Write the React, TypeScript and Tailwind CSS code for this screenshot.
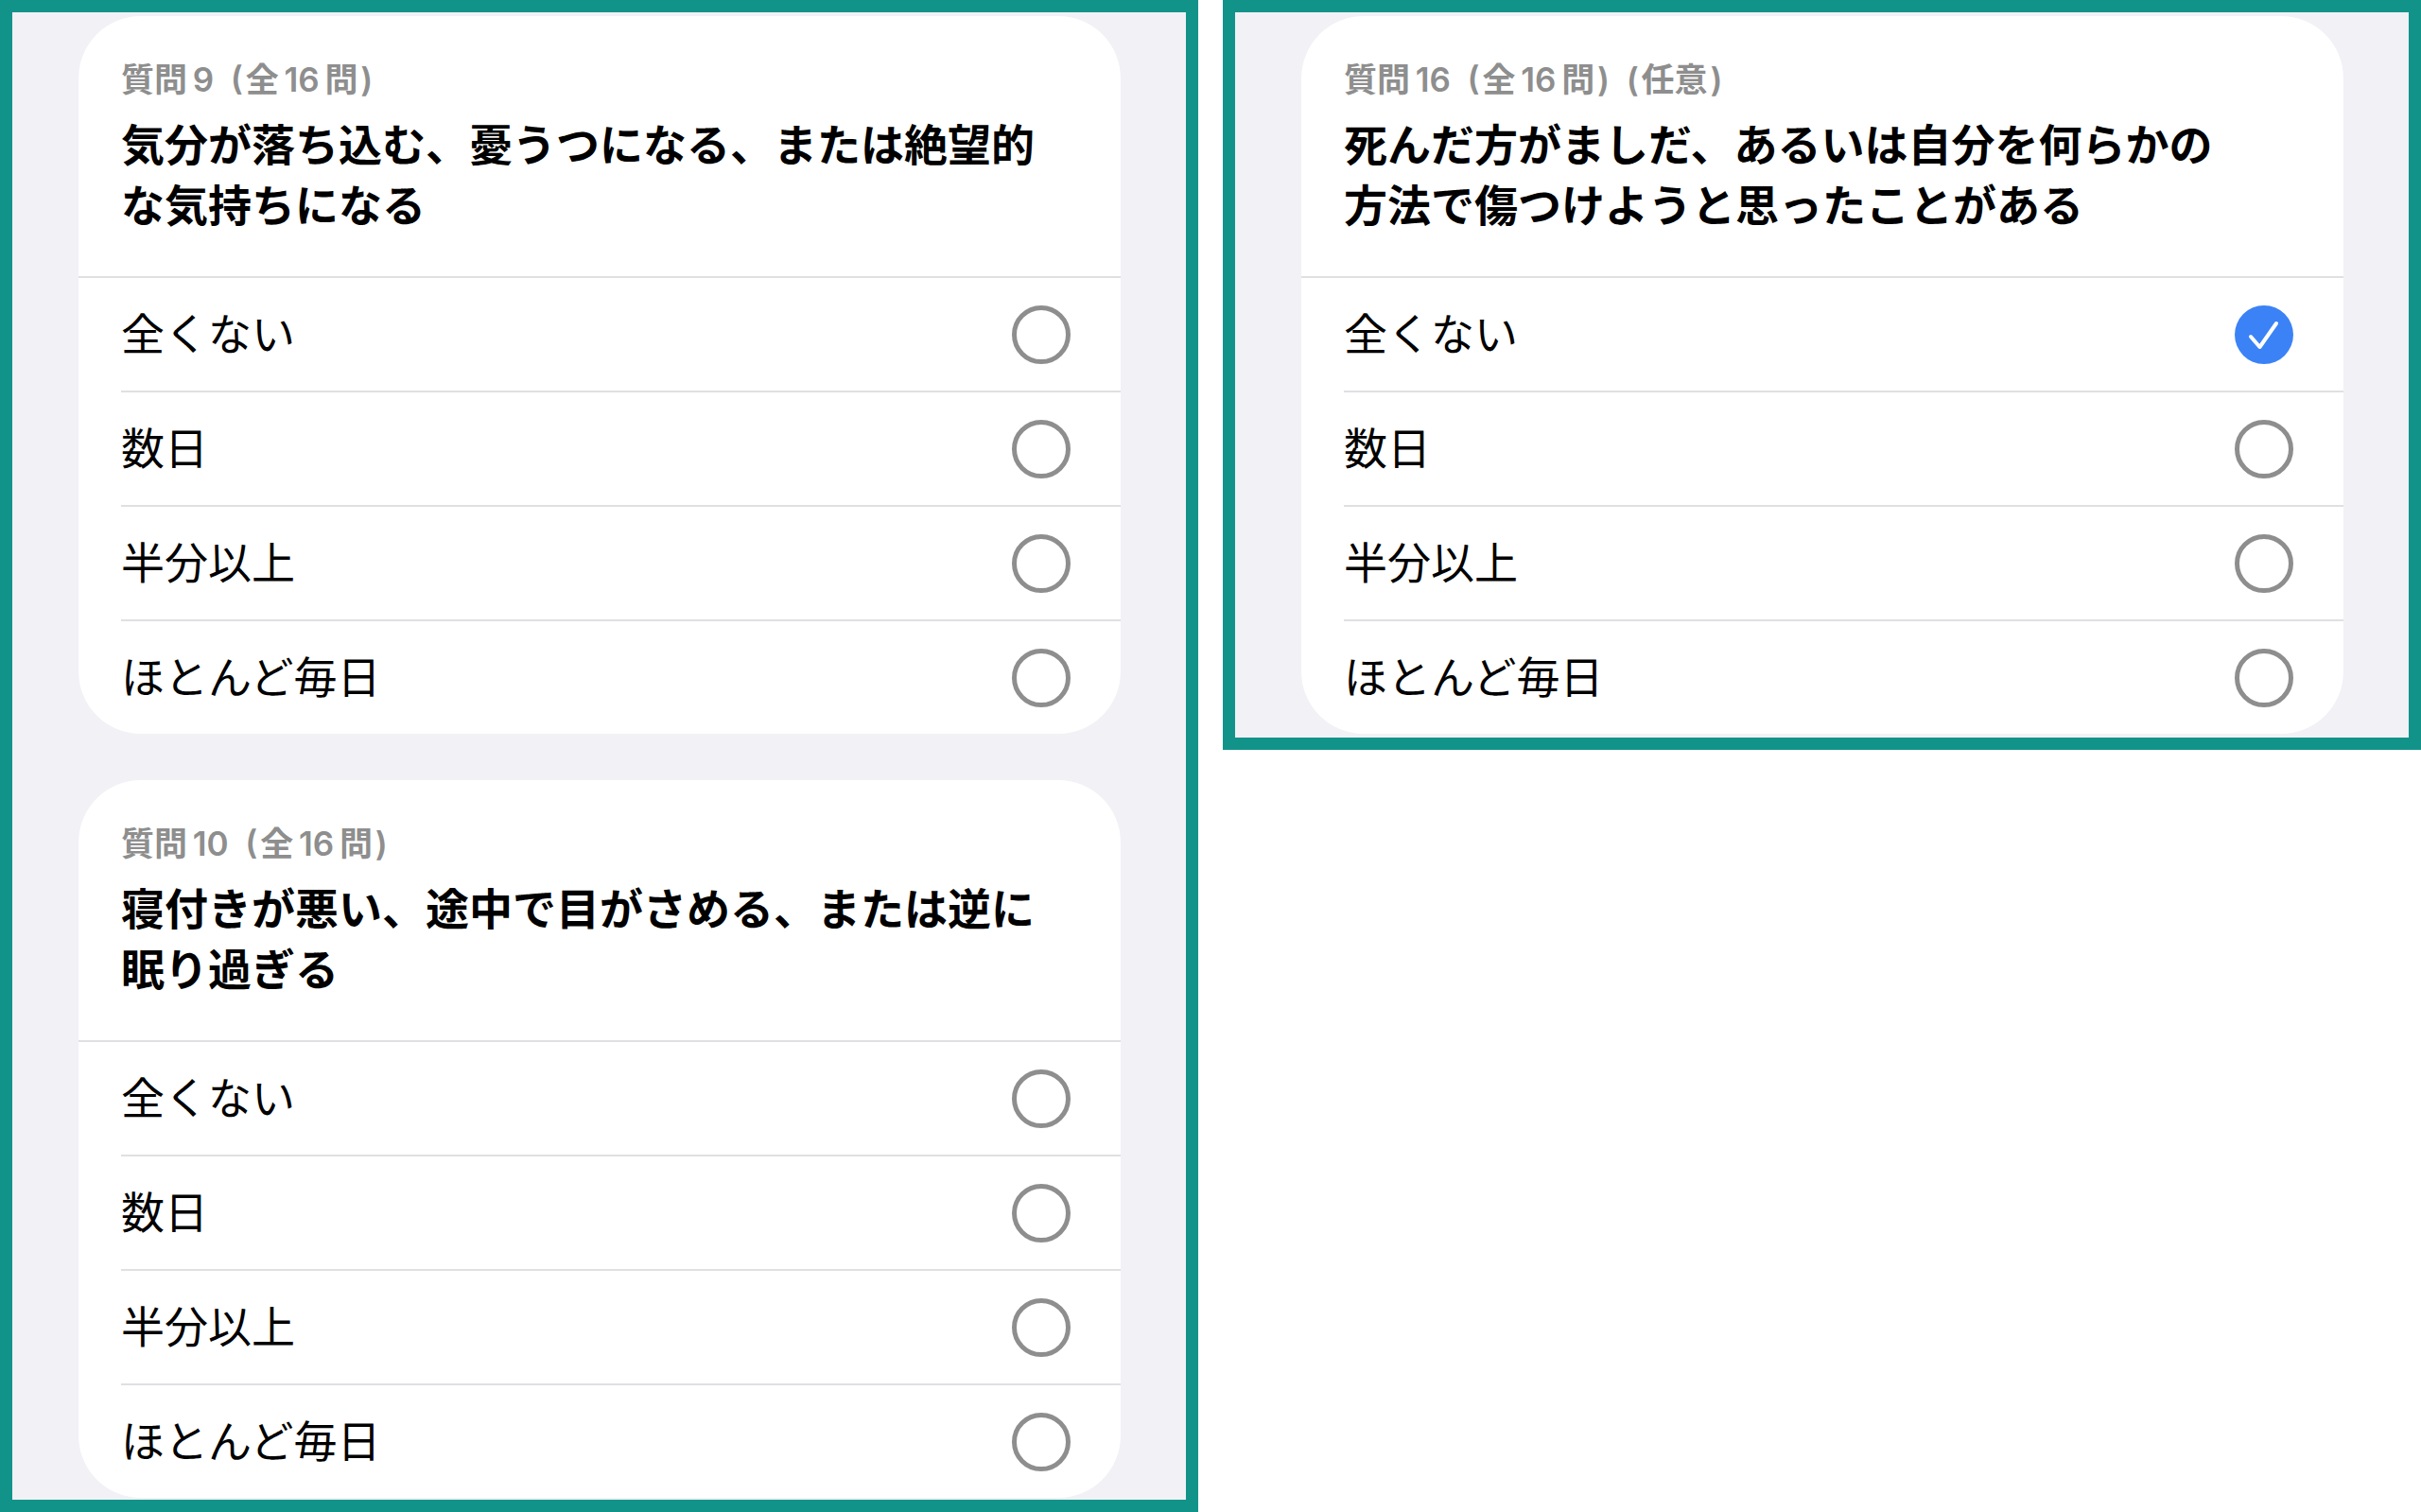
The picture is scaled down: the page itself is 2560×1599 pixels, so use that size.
import React from "react";

const OPTIONS = ["全くない", "数日", "半分以上", "ほとんど毎日"];

interface QuestionCardProps {
  label: string;
  lines: string[];
  selected?: number;
}

function Radio({ checked }: { checked: boolean }) {
  if (checked) {
    return (
      <div className="w-[62px] h-[62px] rounded-full bg-[#3b82f6] flex items-center justify-center shrink-0">
        <svg width="62" height="62" viewBox="0 0 62 62" fill="none">
          <path d="M17 33 L26.5 44 L44 19" stroke="#ffffff" strokeWidth="4" strokeLinecap="round" strokeLinejoin="round" />
        </svg>
      </div>
    );
  }
  return <div className="w-[62px] h-[62px] rounded-full border-[5px] border-[#8e8e8e] shrink-0" />;
}

function QuestionCard({ label, lines, selected }: QuestionCardProps) {
  return (
    <div className="bg-white rounded-[66px] w-[1102px] h-[759px] shrink-0 overflow-hidden">
      {/* Header */}
      <div className="h-[275px] pl-[45px] pt-[45px]">
        <div className="text-[35px] leading-[44px] font-semibold text-[#8e8e8e] whitespace-pre">{label}</div>
        <div className="mt-[15px] text-[46px] leading-[64px] font-bold text-black">
          {lines.map((l) => (
            <div key={l}>{l}</div>
          ))}
        </div>
      </div>
      {/* Options */}
      {OPTIONS.map((o, i) => (
        <div key={o} className={i > 0 ? "pl-[45px]" : ""}>
          <div
            className={`h-[121px] pr-[53px] flex items-center justify-between border-t-2 border-[#e0e0e3] ${
              i > 0 ? "" : "pl-[45px]"
            }`}
          >
            <span className="text-[46px] text-black">{o}</span>
            <Radio checked={selected === i} />
          </div>
        </div>
      ))}
    </div>
  );
}

export default function App() {
  return (
    <div className="w-[2560px] h-[1599px] bg-white flex gap-[26px] font-['Inter','Noto_Sans_CJK_JP',sans-serif] overflow-hidden">
      <div className="w-[1267px] h-[1599px] border-[13px] border-[#12938a] bg-[#f1f1f6] pt-[4px] pl-[70px] flex flex-col gap-[49px] overflow-hidden">
        <QuestionCard
          label={"質問\u20099\u2002(\u200a全\u200916\u2009問\u200a)"}
          lines={["気分が落ち込む、憂うつになる、または絶望的", "な気持ちになる"]}
        />
        <QuestionCard
          label={"質問\u200910\u2002(\u200a全\u200916\u2009問\u200a)"}
          lines={["寝付きが悪い、途中で目がさめる、または逆に", "眠り過ぎる"]}
        />
      </div>
      <div className="w-[1267px] h-[793px] border-[13px] border-[#12938a] bg-[#f1f1f6] pt-[4px] pl-[70px] overflow-hidden">
        <QuestionCard
          label={"質問\u200916\u2002(\u200a全\u200916\u2009問\u200a)\u2002(\u200a任意\u200a)"}
          lines={["死んだ方がましだ、あるいは自分を何らかの", "方法で傷つけようと思ったことがある"]}
          selected={0}
        />
      </div>
    </div>
  );
}
